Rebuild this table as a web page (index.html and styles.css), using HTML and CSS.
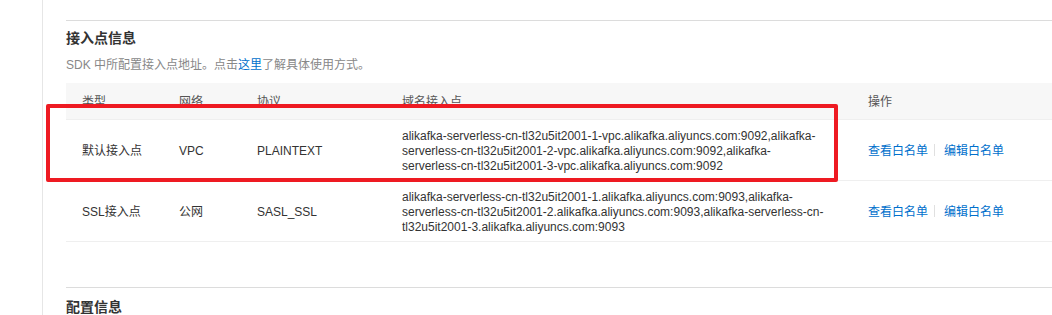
FILE: index.html
```html
<!DOCTYPE html>
<html lang="zh-CN">
<head>
<meta charset="utf-8">
<title>接入点信息</title>
<link rel="stylesheet" href="styles.css">
</head>
<body>
<div class="page">
  <div class="content">
    <div class="divider"></div>
    <h3 class="section-title">接入点信息</h3>
    <p class="desc">SDK 中所配置接入点地址。点击<a class="link" href="#">这里</a>了解具体使用方式。</p>
    <div class="table-wrap">
      <table class="endpoints">
        <colgroup>
          <col class="c-type"><col class="c-net"><col class="c-proto"><col class="c-domain"><col class="c-op">
        </colgroup>
        <thead>
          <tr><th>类型</th><th>网络</th><th>协议</th><th>域名接入点</th><th>操作</th></tr>
        </thead>
        <tbody>
          <tr>
            <td>默认接入点</td>
            <td>VPC</td>
            <td>PLAINTEXT</td>
            <td class="domain">alikafka-serverless-cn-tl32u5it2001-1-vpc.alikafka.aliyuncs.com:9092,alikafka-serverless-cn-tl32u5it2001-2-vpc.alikafka.aliyuncs.com:9092,alikafka-serverless-cn-tl32u5it2001-3-vpc.alikafka.aliyuncs.com:9092</td>
            <td><a class="link" href="#">查看白名单</a><span class="sep"></span><a class="link" href="#">编辑白名单</a></td>
          </tr>
          <tr>
            <td>SSL接入点</td>
            <td>公网</td>
            <td>SASL_SSL</td>
            <td class="domain">alikafka-serverless-cn-tl32u5it2001-1.alikafka.aliyuncs.com:9093,alikafka-serverless-cn-tl32u5it2001-2.alikafka.aliyuncs.com:9093,alikafka-serverless-cn-tl32u5it2001-3.alikafka.aliyuncs.com:9093</td>
            <td><a class="link" href="#">查看白名单</a><span class="sep"></span><a class="link" href="#">编辑白名单</a></td>
          </tr>
        </tbody>
      </table>
      <div class="highlight"></div>
    </div>
    <div class="divider second"></div>
    <h3 class="section-title">配置信息</h3>
  </div>
</div>
</body>
</html>
```

FILE: styles.css
```css
html, body {
  margin: 0;
  padding: 0;
  background: #fff;
}
body {
  font-family: "Liberation Sans", "Noto Sans CJK SC", sans-serif;
  font-size: 12px;
  color: #333;
  overflow: hidden;
}
.page {
  margin-left: 42px;
  border-left: 1px solid #e6e6e6;
  min-height: 315px;
}
.content {
  padding-left: 23px;
  padding-top: 20px;
}
.divider {
  border-top: 1px solid #dcdcdc;
  height: 0;
}
.section-title {
  margin: 0;
  padding-top: 7px;
  font-size: 14px;
  line-height: 20px;
  font-weight: bold;
  color: #333;
}
.desc {
  margin: 0;
  padding-top: 8px;
  line-height: 18px;
  color: #888;
  font-size: 12px;
}
.link {
  color: #0070cc;
  text-decoration: none;
}
.table-wrap {
  position: relative;
  margin-top: 9px;
  width: 987px;
}
.endpoints {
  width: 100%;
  border-collapse: collapse;
  table-layout: fixed;
}
.c-type { width: 97px; }
.c-net { width: 78px; }
.c-proto { width: 145px; }
.c-domain { width: 466px; }
.endpoints th {
  background: #f7f7f7;
  height: 36px;
  padding: 0 16px;
  text-align: left;
  font-weight: normal;
  color: #555;
  border-bottom: 1px solid #efefef;
  box-sizing: border-box;
}
.endpoints td {
  height: 61px;
  padding: 4px 16px 0 16px;
  line-height: 15px;
  border-bottom: 1px solid #efefef;
  box-sizing: border-box;
  vertical-align: middle;
  color: #333;
}
.endpoints td.domain {
  padding-right: 26px;
  word-wrap: break-word;
}
.sep {
  display: inline-block;
  width: 1px;
  height: 12px;
  background: #e0e0e0;
  margin: 0 9px 0 6px;
  vertical-align: -1px;
}
.highlight {
  position: absolute;
  left: -20px;
  top: 21px;
  width: 792px;
  height: 78px;
  border: 4px solid #ee1a22;
  border-radius: 2px;
  box-sizing: border-box;
  pointer-events: none;
}
.divider.second {
  margin-top: 45px;
}
.second + .section-title {
  padding-top: 9px;
}
```
